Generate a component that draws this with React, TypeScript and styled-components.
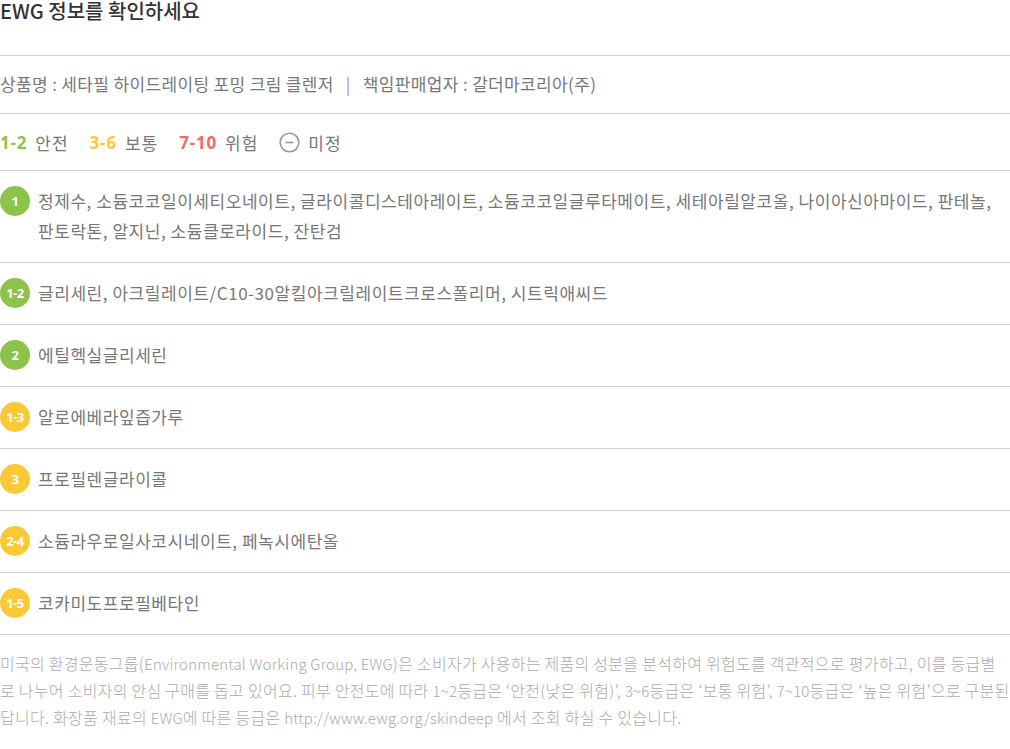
import React from "react";
import styled, { createGlobalStyle } from "styled-components";

const Global = createGlobalStyle`
  html, body { margin: 0; padding: 0; background: #fff; }
  body { font-family: "Noto Sans CJK KR", "Noto Sans", sans-serif; }
`;

const Page = styled.div`
  width: 1010px;
`;

const Title = styled.h2`
  margin: 0;
  height: 56px;
  box-sizing: border-box;
  border-bottom: 1px solid #cfcfcf;
  font-size: 20px;
  font-weight: 500;
  color: #333;
  line-height: 22px;
  letter-spacing: 0;
`;

const InfoRow = styled.div`
  height: 58px;
  box-sizing: border-box;
  border-bottom: 1px solid #cfcfcf;
  display: flex;
  align-items: center;
  padding-bottom: 2px;
  font-size: 17px;
  color: #777;
  letter-spacing: 0.35px;
`;

const Sep = styled.span`
  margin: 0 12px;
  color: #999;
`;

const Legend = styled.div`
  height: 57px;
  box-sizing: border-box;
  border-bottom: 1px solid #cfcfcf;
  display: flex;
  align-items: center;
  gap: 21px;
  font-size: 17px;
  color: #777;
  letter-spacing: 1px;
`;

const LegendItem = styled.div`
  display: flex;
  align-items: center;
  gap: 8px;
`;

const Range = styled.span<{ $c: string }>`
  font-family: "Open Sans", "Noto Sans", sans-serif;
  font-weight: 700;
  font-size: 17px;
  letter-spacing: 0.8px;
  color: ${(p) => p.$c};
`;

const Row = styled.div<{ $h: number }>`
  min-height: ${(p) => p.$h}px;
  box-sizing: border-box;
  border-bottom: 1px solid #cfcfcf;
  display: flex;
  align-items: flex-start;
  padding-top: 15px;
  gap: 8px;
`;

const Badge = styled.span<{ $c: string }>`
  flex: 0 0 30px;
  width: 30px;
  height: 30px;
  border-radius: 50%;
  background: ${(p) => p.$c};
  color: #fff;
  font-family: "Open Sans", "Noto Sans", sans-serif;
  font-weight: 700;
  font-size: 13px;
  letter-spacing: -0.5px;
  display: flex;
  align-items: center;
  justify-content: center;
`;

const Names = styled.div`
  font-size: 17px;
  line-height: 30px;
  color: #777;
  letter-spacing: 0.55px;
`;

const Footer = styled.div`
  padding-top: 15px;
  font-size: 16px;
  line-height: 27px;
  color: #aaa;
  letter-spacing: 0.28px;
  font-weight: 300;
`;

const FootLine = styled.div`
  white-space: nowrap;
`;

const Latin = styled.span`
  font-size: 15px;
  letter-spacing: 0.2px;
`;

const GREEN = "#8cc34b";
const YELLOW = "#fbc935";
const RED = "#ec6b6b";

const rows: { score: string; c: string; names: React.ReactNode; h: number }[] = [
  {
    score: "1",
    c: GREEN,
    h: 92,
    names: (
      <>
        정제수, 소듐코코일이세티오네이트, 글라이콜디스테아레이트, 소듐코코일글루타메이트, 세테아릴알코올, 나이아신아마이드, 판테놀,
        <br />
        판토락톤, 알지닌, 소듐클로라이드, 잔탄검
      </>
    ),
  },
  { score: "1-2", c: GREEN, h: 62, names: "글리세린, 아크릴레이트/C10-30알킬아크릴레이트크로스폴리머, 시트릭애씨드" },
  { score: "2", c: GREEN, h: 62, names: "에틸헥실글리세린" },
  { score: "1-3", c: YELLOW, h: 62, names: "알로에베라잎즙가루" },
  { score: "3", c: YELLOW, h: 62, names: "프로필렌글라이콜" },
  { score: "2-4", c: YELLOW, h: 62, names: "소듐라우로일사코시네이트, 페녹시에탄올" },
  { score: "1-5", c: YELLOW, h: 62, names: "코카미도프로필베타인" },
];

function MinusCircle() {
  return (
    <svg width="21" height="21" viewBox="0 0 21 21">
      <circle cx="10.5" cy="10.5" r="9.3" fill="none" stroke="#999" strokeWidth="1.6" />
      <line x1="6.5" y1="10.5" x2="14.5" y2="10.5" stroke="#999" strokeWidth="1.6" />
    </svg>
  );
}

export default function App() {
  return (
    <Page>
      <Global />
      <Title>EWG 정보를 확인하세요</Title>
      <InfoRow>
        상품명 : 세타필 하이드레이팅 포밍 크림 클렌저<Sep>|</Sep>책임판매업자 : 갈더마코리아(주)
      </InfoRow>
      <Legend>
        <LegendItem>
          <Range $c={GREEN}>1-2</Range>안전
        </LegendItem>
        <LegendItem>
          <Range $c={YELLOW}>3-6</Range>보통
        </LegendItem>
        <LegendItem>
          <Range $c={RED}>7-10</Range>위험
        </LegendItem>
        <LegendItem>
          <MinusCircle />
          미정
        </LegendItem>
      </Legend>
      {rows.map((r) => (
        <Row key={r.score} $h={r.h}>
          <Badge $c={r.c}>{r.score}</Badge>
          <Names>{r.names}</Names>
        </Row>
      ))}
      <Footer>
        <FootLine>
          미국의 환경운동그룹(<Latin>Environmental Working Group, EWG</Latin>)은 소비자가 사용하는 제품의 성분을 분석하여 위험도를 객관적으로 평가하고, 이를 등급별
        </FootLine>
        <FootLine>
          로 나누어 소비자의 안심 구매를 돕고 있어요. 피부 안전도에 따라 <Latin>1~2</Latin>등급은 ‘안전(낮은 위험)’, <Latin>3~6</Latin>등급은 ‘보통 위험’, <Latin>7~10</Latin>등급은 ‘높은 위험’으로 구분된
        </FootLine>
        <FootLine>
          답니다. 화장품 재료의 <Latin>EWG</Latin>에 따른 등급은 <Latin>http://www.ewg.org/skindeep</Latin> 에서 조회 하실 수 있습니다.
        </FootLine>
      </Footer>
    </Page>
  );
}
